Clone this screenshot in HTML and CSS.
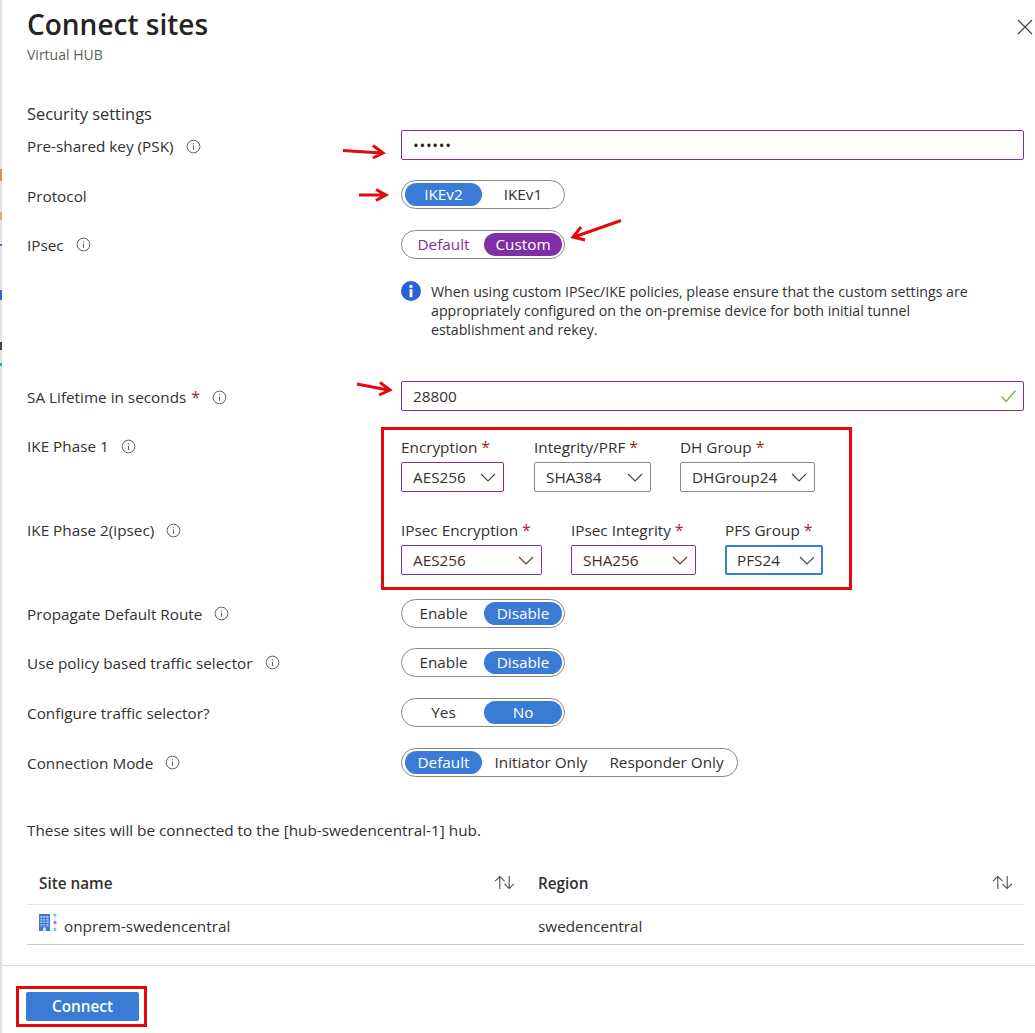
FILE: index.html
```html
<!DOCTYPE html>
<html lang="en">
<head>
<meta charset="utf-8">
<title>Connect sites</title>
<link rel="stylesheet" href="styles.css">
</head>
<body>
<div class="panel">
  <button class="close" aria-label="Close"><svg width="16" height="16" viewBox="0 0 16 16"><path d="M1 1l14 14M15 1L1 15" stroke="#444" stroke-width="1.2" fill="none"/></svg></button>
  <header class="head">
    <h1>Connect sites</h1>
    <p class="sub">Virtual HUB</p>
  </header>
  <main class="body">
    <h2>Security settings</h2>

    <div class="row row-psk">
      <div class="label nudge">Pre-shared key (PSK)<svg class="info" viewBox="0 0 16 16"><circle cx="8" cy="8" r="6.8"/><path d="M8 7v4.6M8 4.4v1.2"/></svg></div>
      <div class="input purple"><span class="dots">••••••</span></div>
    </div>

    <div class="row row-toggle gap-20">
      <div class="label nudge">Protocol</div>
      <div class="toggle"><span class="opt on w-77">IKEv2</span><span class="opt w-78">IKEv1</span></div>
    </div>

    <div class="row row-toggle gap-21">
      <div class="label">IPsec<svg class="info" viewBox="0 0 16 16"><circle cx="8" cy="8" r="6.8"/><path d="M8 7v4.6M8 4.4v1.2"/></svg></div>
      <div class="toggle"><span class="opt alt w-77">Default</span><span class="opt on-purple w-78">Custom</span></div>
    </div>

    <div class="notice">
      <svg class="notice-icon" viewBox="0 0 20 20"><circle cx="10" cy="10" r="10" fill="#2f5fd8"/><rect x="8.6" y="8.2" width="2.8" height="8" fill="#fff"/><circle cx="10" cy="5.4" r="1.7" fill="#fff"/></svg>
      <p>When using custom IPSec/IKE policies, please ensure that the custom settings are appropriately configured on the on-premise device for both initial tunnel establishment and rekey.</p>
    </div>

    <div class="row row-sa">
      <div class="label nudge"><span>SA Lifetime in seconds</span><b class="req req-gap">*</b><svg class="info" viewBox="0 0 16 16"><circle cx="8" cy="8" r="6.8"/><path d="M8 7v4.6M8 4.4v1.2"/></svg></div>
      <div class="input purple spread"><span>28800</span><svg width="17" height="14" viewBox="0 0 17 14"><path d="M1.5 7.5l4.6 5L15.5 1.5" stroke="#6bb03a" stroke-width="1.2" fill="none"/></svg></div>
    </div>

    <div class="phases">
      <div class="phase-labels">
        <div class="label phase-1">IKE Phase 1<svg class="info" viewBox="0 0 16 16"><circle cx="8" cy="8" r="6.8"/><path d="M8 7v4.6M8 4.4v1.2"/></svg></div>
        <div class="label phase-2">IKE Phase 2(ipsec)<svg class="info" viewBox="0 0 16 16"><circle cx="8" cy="8" r="6.8"/><path d="M8 7v4.6M8 4.4v1.2"/></svg></div>
      </div>
      <div class="redbox">
        <div class="sel-row">
          <div class="field f-103"><div class="flabel">Encryption <b class="req">*</b></div><div class="select purple"><span>AES256</span><svg class="chev" viewBox="0 0 16 9"><path d="M1 1l7 7 7-7"/></svg></div></div>
          <div class="field f-117 ml-30"><div class="flabel">Integrity/PRF <b class="req">*</b></div><div class="select"><span>SHA384</span><svg class="chev" viewBox="0 0 16 9"><path d="M1 1l7 7 7-7"/></svg></div></div>
          <div class="field f-135 ml-29"><div class="flabel">DH Group <b class="req">*</b></div><div class="select"><span>DHGroup24</span><svg class="chev" viewBox="0 0 16 9"><path d="M1 1l7 7 7-7"/></svg></div></div>
        </div>
        <div class="sel-row second">
          <div class="field f-141"><div class="flabel">IPsec Encryption <b class="req">*</b></div><div class="select purple"><span>AES256</span><svg class="chev" viewBox="0 0 16 9"><path d="M1 1l7 7 7-7"/></svg></div></div>
          <div class="field f-125 ml-29"><div class="flabel">IPsec Integrity <b class="req">*</b></div><div class="select purple"><span>SHA256</span><svg class="chev" viewBox="0 0 16 9"><path d="M1 1l7 7 7-7"/></svg></div></div>
          <div class="field f-98 ml-29"><div class="flabel">PFS Group <b class="req">*</b></div><div class="select focus"><span>PFS24</span><svg class="chev" viewBox="0 0 16 9"><path d="M1 1l7 7 7-7"/></svg></div></div>
        </div>
      </div>
    </div>

    <div class="row row-toggle gap-9">
      <div class="label">Propagate Default Route<svg class="info" viewBox="0 0 16 16"><circle cx="8" cy="8" r="6.8"/><path d="M8 7v4.6M8 4.4v1.2"/></svg></div>
      <div class="toggle"><span class="opt w-77">Enable</span><span class="opt on w-78">Disable</span></div>
    </div>
    <div class="row row-toggle gap-20">
      <div class="label">Use policy based traffic selector<svg class="info" viewBox="0 0 16 16"><circle cx="8" cy="8" r="6.8"/><path d="M8 7v4.6M8 4.4v1.2"/></svg></div>
      <div class="toggle"><span class="opt w-77">Enable</span><span class="opt on w-78">Disable</span></div>
    </div>
    <div class="row row-toggle gap-21">
      <div class="label">Configure traffic selector?</div>
      <div class="toggle"><span class="opt w-77">Yes</span><span class="opt on w-78">No</span></div>
    </div>
    <div class="row row-toggle gap-21">
      <div class="label">Connection Mode<svg class="info" viewBox="0 0 16 16"><circle cx="8" cy="8" r="6.8"/><path d="M8 7v4.6M8 4.4v1.2"/></svg></div>
      <div class="toggle"><span class="opt on w-77">Default</span><span class="opt w-mid">Initiator Only</span><span class="opt w-end">Responder Only</span></div>
    </div>

    <p class="sites-note">These sites will be connected to the [hub-swedencentral-1] hub.</p>

    <table class="sites">
      <thead>
        <tr>
          <th class="c-name"><div class="th-in">Site name<svg class="sort" viewBox="0 0 22 16"><path d="M6 15V1.5M1 6.5l5-5 5 5M16 1v13.5M11 9.500l5 5 5-5"/></svg></div></th>
          <th><div class="th-in">Region<svg class="sort" viewBox="0 0 22 16"><path d="M6 15V1.5M1 6.5l5-5 5 5M16 1v13.5M11 9.500l5 5 5-5"/></svg></div></th>
        </tr>
      </thead>
      <tbody>
        <tr>
          <td class="c-name"><div class="site-cell">
            <svg class="site-icon" width="19" height="19" viewBox="0 0 19 19">
              <rect x="0" y="1" width="11" height="17" fill="#3f78cf"/>
              <rect x="1.5" y="3" width="8" height="11" fill="#a9c6ee"/>
              <path d="M1.5 5.5h8M1.5 8h8M1.500 10.500h8M1.500 13h8M4 3v11M6.700 3v11" stroke="#3f78cf" stroke-width="1"/>
              <rect x="4.200" y="14.500" width="2.600" height="3.500" fill="#dbe8f8"/>
              <path d="M16 3v13" stroke="#bfe6f2" stroke-width="1"/>
              <rect x="14.500" y="0.500" width="3" height="3" rx="1" fill="#5fd0ea"/>
              <rect x="14.500" y="8" width="3" height="3" rx="1" fill="#a36fe8"/>
              <rect x="14.500" y="15" width="3" height="3" rx="1" fill="#5fd0ea"/>
            </svg>onprem-swedencentral</div></td>
          <td>swedencentral</td>
        </tr>
      </tbody>
    </table>
  </main>
  <footer class="foot">
    <div class="btn-mark"><button class="primary">Connect</button></div>
  </footer>

  <svg class="arrow a1" width="46" height="16" viewBox="0 0 46 16"><path d="M1 6.500l38 2.500M31 1.500l10 7.500-10 5" stroke="#e5080f" fill="none" stroke-width="3"/></svg>
  <svg class="arrow a2" width="32" height="14" viewBox="0 0 32 14"><path d="M1 7h26M18 1.500l10 5.500-10 5.500" stroke="#e5080f" fill="none" stroke-width="3"/></svg>
  <svg class="arrow a3" width="54" height="24" viewBox="0 0 54 24"><path d="M52 1.500L5 18M12 8l-8 10 12 3" stroke="#e5080f" fill="none" stroke-width="3"/></svg>
  <svg class="arrow a4" width="38" height="16" viewBox="0 0 38 16"><path d="M1 3l31 6M24 1.500l10 7.500-11 5" stroke="#e5080f" fill="none" stroke-width="3"/></svg>
</div>
</body>
</html>
```

FILE: styles.css
```css
* { box-sizing: border-box; }
html, body { margin: 0; padding: 0; background: #fff; }
body {
  font-family: "Open Sans", "Noto Sans", sans-serif;
  font-size: 15.3px;
  color: #323130;
  width: 1035px;
  height: 1033px;
  overflow: hidden;
}
.panel {
  position: relative;
  display: flex;
  flex-direction: column;
  height: 1033px;
  border-left: 2px solid #e2e2e2;
}
.panel::before {
  content: "";
  position: absolute;
  left: -2px;
  top: 130px;
  width: 2px;
  height: 300px;
  background: linear-gradient(to bottom,
    transparent 0 39px, #d9933f 39px 51px,
    transparent 51px 82px, #e8ad68 82px 90px,
    transparent 90px 114px, #3a7bd5 114px 116px,
    transparent 116px 160px, #3a66c8 160px 170px,
    transparent 170px 212px, #444 212px 220px,
    transparent 220px 233px, #3a9bd5 233px 236px,
    transparent 236px);
}
.close {
  position: absolute;
  top: 19px;
  right: 2px;
  padding: 0;
  border: 0;
  background: none;
  line-height: 0;
}
.head { padding: 4px 0 0 25px; height: 104px; }
h1 {
  margin: 0;
  font-size: 28px;
  line-height: 40px;
  font-weight: 600;
  color: #252423;
}
.sub { margin: 1px 0 0; line-height: 20px; font-size: 14px; color: #605e5c; }
.body { padding: 0 11px 0 25px; flex: 1; }
h2 { margin: 0; font-size: 16.400px; line-height: 20px; font-weight: 400; height: 26px; }

.row { display: grid; grid-template-columns: 374px 1fr; }
.label { display: flex; align-items: center; height: 20px; white-space: nowrap; }
.nudge { padding-top: 2px; }
.info { width: 15px; height: 15px; margin-left: 12px; fill: none; stroke: #555; stroke-width: 1; flex: none; }

.input {
  display: flex;
  align-items: center;
  height: 30px;
  padding: 0 11px;
  border: 1px solid #8a8886;
  border-radius: 2px;
}
.purple { border-color: #7f2fa5; }
.spread { justify-content: space-between; padding-right: 6px; }
.dots { font-size: 15.300px; letter-spacing: 0.7px; color: #222; }

.row-psk { align-items: center; }
.row-toggle { align-items: center; }
.gap-9 { margin-top: 9px; }
.gap-20 { margin-top: 20px; }
.gap-21 { margin-top: 21px; }

.toggle {
  display: inline-flex;
  justify-self: start;
  align-items: center;
  height: 29px;
  padding: 0 2px 0 3px;
  border: 1px solid #8a8886;
  border-radius: 15px;
}
.opt {
  display: block;
  height: 23px;
  line-height: 22px;
  text-align: center;
  border-radius: 12px;
  white-space: nowrap;
}
.w-77 { width: 77px; }
.w-78 { width: 78px; margin-left: 2px; }
.w-mid { width: 118px; }
.w-end { width: 133px; margin-right: 2px; }
.on { background: #3a7bd5; color: #fff; }
.on-purple { background: #7f2fa5; color: #fff; }
.alt { color: #7f2fa5; }

.notice {
  display: flex;
  margin: 21px 0 0 374px;
  height: 60px;
}
.notice-icon { width: 20px; height: 20px; flex: none; margin-top: 1px; }
.notice p {
  margin: 2px 0 0 10px;
  width: 560px;
  font-size: 14.200px;
  line-height: 19px;
}
.row-sa { margin-top: 41px; align-items: center; }
.req-gap { margin-left: 5px; }

.phases { display: flex; margin-top: 16px; }
.phase-labels { width: 354px; padding-top: 9px; }
.phase-2 { margin-top: 64px; }
.redbox {
  width: 471px;
  height: 163px;
  padding: 7px 0 0 17px;
  border: 3px solid #e5080f;
}
.sel-row { display: flex; }
.second { margin-top: 28px; }
.field { flex: none; }
.f-103 { width: 103px; }
.f-117 { width: 117px; }
.f-135 { width: 135px; }
.f-141 { width: 141px; }
.f-125 { width: 125px; }
.f-98 { width: 98px; }
.ml-30 { margin-left: 30px; }
.ml-29 { margin-left: 29px; }
.flabel { height: 25px; line-height: 20px; white-space: nowrap; }
.req { color: #a4262c; font-weight: 400; font-size: 16px; line-height: 14px; }
.select {
  display: flex;
  align-items: center;
  justify-content: space-between;
  height: 30px;
  padding: 0 7px 0 11px;
  border: 1px solid #8a8886;
  border-radius: 2px;
}
.select.purple { border-color: #7f2fa5; }
.select.focus { border: 2px solid #3a7bd5; padding-left: 10px; padding-right: 6px; }
.chev { width: 16px; height: 9px; fill: none; stroke: #444; stroke-width: 1.1; }

.sites-note { margin: 43px 0 0; line-height: 20px; }
.sites { width: 997px; margin-top: 22px; border-collapse: collapse; table-layout: fixed; }
.sites th { height: 42px; padding: 0 0 0 12px; font-weight: 600; text-align: left; border-bottom: 1px solid #e6e6e6; }
.sites td { height: 40px; padding: 3px 0 0 12px; border-bottom: 1px solid #c8c8c8; }
.sites .c-name { width: 499px; }
.th-in { display: flex; justify-content: space-between; align-items: center; padding-right: 11px; }
.sort { width: 21px; height: 15px; fill: none; stroke: #444; stroke-width: 1.1; }
.site-cell { display: flex; align-items: center; }
.site-icon { margin-right: 6px; position: relative; top: -3px; }

.foot { height: 68px; border-top: 1px solid #ddd; padding: 20px 0 0 14px; flex: none; }
.btn-mark { width: 131px; height: 41px; padding: 3px 7px; border: 3px solid #e5080f; }
.primary {
  display: block;
  width: 113px;
  height: 29px;
  padding: 0 0 2px;
  border: 0;
  border-radius: 2px;
  background: #3a7bd5;
  color: #fff;
  font: 600 15.300px "Open Sans", sans-serif;
}
.arrow { position: absolute; pointer-events: none; }
.a1 { left: 340px; top: 144px; }
.a2 { left: 356px; top: 188px; }
.a3 { left: 567px; top: 219px; }
.a4 { left: 354px; top: 381px; }
```
